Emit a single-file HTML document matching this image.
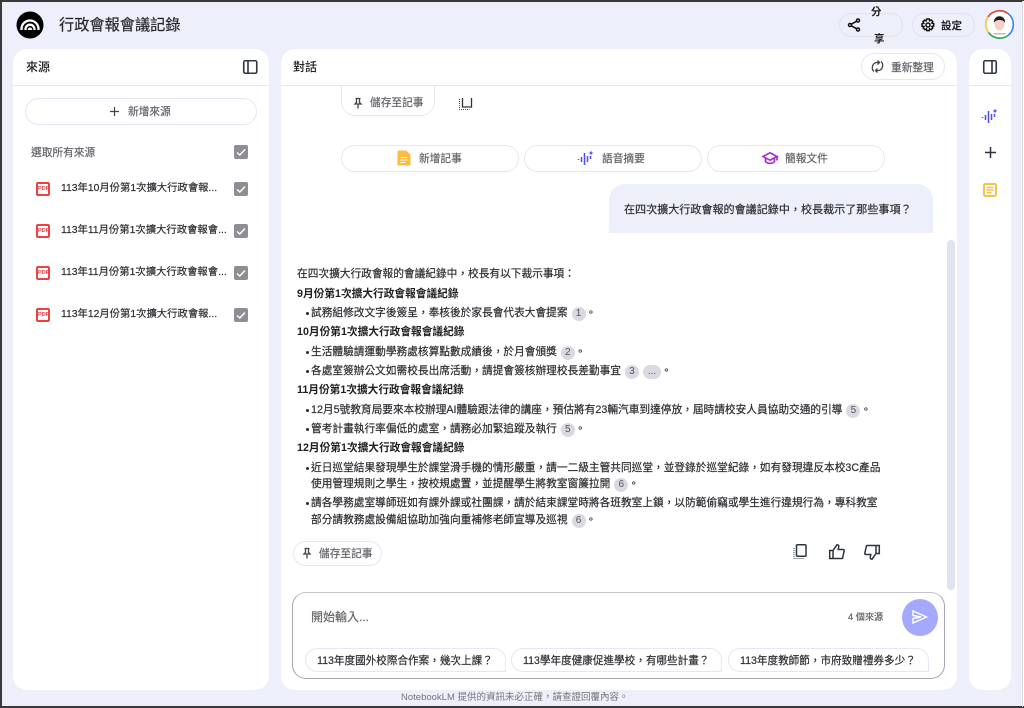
<!DOCTYPE html>
<html lang="zh-Hant"><head><meta charset="utf-8"><title>行政會報會議記錄</title>
<style>
html,body{margin:0;padding:0}
body{width:1024px;height:708px;position:relative;overflow:hidden;background:#edeffa;font-family:"Liberation Sans","Noto Sans CJK TC",sans-serif;color:#3c3c40}
*{box-sizing:border-box}
.t{position:absolute;white-space:nowrap;line-height:16px;font-size:10.7px;color:#2b2b30;transform:translateY(1px);-webkit-text-stroke:.18px currentColor}
.b{font-weight:700;color:#1f1f22;-webkit-text-stroke:0}
.g{color:#626268}
.s{font-size:10.35px}
.panel{position:absolute;top:49px;height:641px;background:#fff;border-radius:14px}
.pill{position:absolute;border:1px solid #e6e7f2;border-radius:14px;background:#fff}
.hl{position:absolute;height:1px;background:#e6e7f2;top:85px}
.cb{position:absolute;left:234px;width:14px;height:14px;background:#8e8e94;border-radius:2px}
.cb svg{display:block}
.pdf{position:absolute;left:36px;width:14px;height:14px;border:2px solid #ea4343;border-radius:2px;color:#ea4343;font-size:5.5px;line-height:10px;text-align:center;font-weight:700;font-family:"Liberation Sans",sans-serif}
.c{display:inline-block;width:14px;height:14px;border-radius:7px;background:#d9d9e3;color:#55555d;font-size:10px;line-height:14px;text-align:center;vertical-align:0;margin:0 0 0 4px;-webkit-text-stroke:0}
svg{position:absolute;overflow:visible}
.bl{position:absolute;left:306px;width:3px;height:3px;border-radius:50%;background:#2b2b30}
</style></head><body>

<!-- logo -->
<svg style="left:16px;top:11px" width="28" height="28" viewBox="0 0 28 28"><circle cx="14" cy="14" r="13.500" fill="#000"/><path d="M5.500 19v-1a8.500 8.500 0 0 1 17 0v1M9.500 19v-.8a4.500 4.500 0 0 1 9 0v.8M13 19v-.3a1 1 0 0 1 2 0v.3" stroke="#fff" stroke-width="2.300" fill="none"/></svg>
<div class="t" style="left:59px;top:15px;font-size:15.2px;line-height:20px;color:#26262a">行政會報會議記錄</div>

<!-- top right -->
<div class="pill" style="left:839px;top:13px;width:64px;height:24px;border-radius:12px;background:#edeffa;border-color:#e0e2ee"></div>
<svg style="left:847px;top:18px" width="14" height="14" viewBox="0 0 14 14"><g fill="none" stroke="#111" stroke-width="1.500"><circle cx="11" cy="2.500" r="1.500"/><circle cx="3" cy="7" r="1.500"/><circle cx="11" cy="11.500" r="1.500"/><path d="M4.300 6.200l5.400-3M4.300 7.800l5.400 3"/></g></svg>
<div class="t b" style="left:871px;top:3px;font-size:10.5px">分</div>
<div class="t b" style="left:874px;top:30px;font-size:10.5px">享</div>
<div class="pill" style="left:912px;top:13px;width:63px;height:24px;border-radius:12px;background:#edeffa;border-color:#e0e2ee"></div>
<svg style="left:921px;top:18px" width="14" height="14" viewBox="0 0 14 14"><circle cx="7" cy="7" r="2" fill="none" stroke="#111" stroke-width="1.500"/><path d="M5.800 1h2.400l.4 1.700 1.500-.8 1.700 1.700-.9 1.500 1.800.5v2.400l-1.800.5.9 1.500-1.700 1.700-1.500-.8-.4 1.700H5.800l-.4-1.700-1.500.8-1.700-1.700.9-1.500L1 8.200V5.800l1.800-.5-.9-1.500 1.700-1.700 1.500.8z" fill="none" stroke="#111" stroke-width="1.500"/></svg>
<div class="t b" style="left:941px;top:17px;font-size:10.5px">設定</div>
<svg style="left:985px;top:10px" width="30" height="30" viewBox="0 0 30 30"><circle cx="14.500" cy="14.500" r="14" fill="#fff"/><path d="M3 7A14 14 0 0 1 23 3.500" fill="none" stroke="#e0483c" stroke-width="1.700"/><path d="M23 3.500A14 14 0 0 1 23 25.500" fill="none" stroke="#4285f4" stroke-width="1.700"/><path d="M3 7A14 14 0 0 0 3.500 22.500" fill="none" stroke="#f5c542" stroke-width="1.700"/><path d="M3.500 22.500A14 14 0 0 0 23 25.500" fill="none" stroke="#34a853" stroke-width="1.700"/><ellipse cx="14.500" cy="14" rx="5" ry="6.500" fill="#f3d2c6"/><path d="M9 13c-1-9 12-9 11 0-1-4-10-4-11 0z" fill="#1c1c1c"/><path d="M8.500 24.500h12v-1.500h-12z" fill="#bbb"/></svg>

<!-- left panel -->
<div class="panel" style="left:13px;width:256px"></div>
<div class="hl" style="left:13px;width:256px"></div>
<div class="t b" style="left:26px;top:58px;font-size:12px;font-weight:500;color:#222">來源</div>
<svg style="left:243px;top:60px" width="15" height="14" viewBox="0 0 15 14"><rect x=".75" y=".75" width="13" height="12.500" rx="1.500" fill="none" stroke="#2f3646" stroke-width="1.600"/><path d="M5 1v12" stroke="#2f3646" stroke-width="1.600"/></svg>
<div class="pill" style="left:25px;top:98px;width:232px;height:27px;border-radius:14px"></div>
<svg style="left:110px;top:107px" width="9" height="9"><path d="M4.500 0v9M0 4.500h9" stroke="#444" stroke-width="1.200"/></svg>
<div class="t g" style="left:128px;top:103px">新增來源</div>
<div class="t g" style="left:31px;top:144px">選取所有來源</div>
<div class="cb" style="top:145px"><svg width="14" height="14"><path d="M3 7.500l2.800 2.500L11 4.500" stroke="#fff" stroke-width="1.400" fill="none"/></svg></div>

<div class="pdf" style="top:182px">PDF</div><div class="t s" style="left:61px;top:180px">113年10月份第1次擴大行政會報...</div>
<div class="cb" style="top:182px"><svg width="14" height="14"><path d="M3 7.500l2.800 2.500L11 4.500" stroke="#fff" stroke-width="1.400" fill="none"/></svg></div>
<div class="pdf" style="top:224px">PDF</div><div class="t s" style="left:61px;top:222px">113年11月份第1次擴大行政會報會...</div>
<div class="cb" style="top:224px"><svg width="14" height="14"><path d="M3 7.500l2.800 2.500L11 4.500" stroke="#fff" stroke-width="1.400" fill="none"/></svg></div>
<div class="pdf" style="top:266px">PDF</div><div class="t s" style="left:61px;top:264px">113年11月份第1次擴大行政會報會...</div>
<div class="cb" style="top:266px"><svg width="14" height="14"><path d="M3 7.500l2.800 2.500L11 4.500" stroke="#fff" stroke-width="1.400" fill="none"/></svg></div>
<div class="pdf" style="top:308px">PDF</div><div class="t s" style="left:61px;top:306px">113年12月份第1次擴大行政會報...</div>
<div class="cb" style="top:308px"><svg width="14" height="14"><path d="M3 7.500l2.800 2.500L11 4.500" stroke="#fff" stroke-width="1.400" fill="none"/></svg></div>

<!-- chat panel -->
<div class="panel" style="left:281px;width:676px"></div>
<div class="t b" style="left:293px;top:58px;font-size:12px;font-weight:500;color:#222">對話</div>
<div class="pill" style="left:861px;top:53px;width:84px;height:27px;border-radius:14px"></div>
<svg style="left:871px;top:60px" width="13" height="13" viewBox="0 0 13 13"><path d="M3 11.500C.500 9.500.500 4 5 2.500h3M6.500 .500L8.500 2.500 6.500 4.500M10 1.500c2.500 2 2.500 7.500-2 9H5M6.500 8.500L4.500 10.500 6.500 12.500" fill="none" stroke="#444" stroke-width="1.300"/></svg>
<div class="t g" style="left:891px;top:59px">重新整理</div>

<div style="position:absolute;left:281px;top:85px;width:676px;height:40px;overflow:hidden">
<div class="pill" style="left:60px;top:-25px;width:94px;height:56px;border-radius:14px"></div>
</div>
<div class="hl" style="left:281px;width:676px"></div>
<svg style="left:354px;top:98px" width="8" height="11" viewBox="0 0 8 11"><path d="M1.500 .500h5M2.500 .500v4L1 6h6L5.500 4.500v-4M4 6v4.500" fill="none" stroke="#444" stroke-width="1.300"/></svg>
<div class="t g" style="left:370px;top:94px">儲存至記事</div>
<svg style="left:459px;top:98px" width="13" height="12" viewBox="0 0 13 12"><path d="M3.500 0v9h9V0" fill="none" stroke="#333" stroke-width="1.300"/><path d="M.500 1v10.500h10" fill="none" stroke="#444" stroke-dasharray="1 1"/></svg>

<div class="pill" style="left:341px;top:145px;width:178px;height:27px"></div>
<svg style="left:397px;top:150px" width="14" height="16" viewBox="0 0 14 16"><path d="M1 2a1 1 0 0 1 1-1h7l4 4v9a1 1 0 0 1-1 1H2a1 1 0 0 1-1-1z" fill="#fbbc40" stroke="#fbbc40"/><path d="M3.500 7.500h7M3.500 10h7M3.500 12.500h5" stroke="#fff" stroke-width="1"/></svg>
<div class="t g" style="left:419px;top:150px">新增記事</div>
<div class="pill" style="left:524px;top:145px;width:178px;height:27px"></div>
<svg style="left:578px;top:150px" width="16" height="16" viewBox="0 0 16 16"><path d="M.500 9v1M3.500 7v5M6.500 3v12M9.500 6v6M12.500 6v3" stroke="#4f4ff0" stroke-width="1.500" fill="none"/><path d="M13 .500l.7 1.800 1.800.7-1.800.7-.7 1.800-.7-1.800-1.800-.7 1.800-.7z" fill="#4f4ff0"/></svg>
<div class="t g" style="left:602px;top:150px">語音摘要</div>
<div class="pill" style="left:707px;top:145px;width:178px;height:27px"></div>
<svg style="left:762px;top:152px" width="16" height="13" viewBox="0 0 16 13"><path d="M8 .800L15 4.500 8 8.200 1 4.500zM3.500 6v3.500c2 2.500 7 2.500 9 0V6M15 4.500v4" fill="none" stroke="#a82de0" stroke-width="1.700"/></svg>
<div class="t g" style="left:785px;top:150px">簡報文件</div>

<div style="position:absolute;left:609px;top:184px;width:324px;height:49px;background:#edeffa;border-radius:16px 16px 0 0"></div>
<div class="t" style="left:624px;top:201px;font-size:11.070px">在四次擴大行政會報的會議記錄中，校長裁示了那些事項？</div>

<div style="position:absolute;left:947px;top:240px;width:8px;height:350px;background:#dfe3ef;border-radius:4px"></div>

<div class="t" style="left:297px;top:265px">在四次擴大行政會報的會議紀錄中，校長有以下裁示事項：</div>
<div class="t b" style="left:297px;top:285px">9月份第1次擴大行政會報會議紀錄</div>
<div class="bl" style="top:312px"></div><div class="t" style="left:311px;top:304px">試務組修改文字後簽呈，奉核後於家長會代表大會提案<span class="c">1</span>。</div>
<div class="t b" style="left:297px;top:323px">10月份第1次擴大行政會報會議紀錄</div>
<div class="bl" style="top:351px"></div><div class="t" style="left:311px;top:343px">生活體驗請運動學務處核算點數成績後，於月會頒獎<span class="c">2</span>。</div>
<div class="bl" style="top:370px"></div><div class="t" style="left:311px;top:362px">各處室簽辦公文如需校長出席活動，請提會簽核辦理校長差勤事宜<span class="c">3</span><span class="c" style="width:18px;margin-left:4px">...</span>。</div>
<div class="t b" style="left:297px;top:381px">11月份第1次擴大行政會報會議紀錄</div>
<div class="bl" style="top:409px"></div><div class="t" style="left:311px;top:401px">12月5號教育局要來本校辦理AI體驗跟法律的講座，預估將有23輛汽車到達停放，屆時請校安人員協助交通的引導<span class="c">5</span>。</div>
<div class="bl" style="top:428px"></div><div class="t" style="left:311px;top:420px">管考計畫執行率偏低的處室，請務必加緊追蹤及執行<span class="c">5</span>。</div>
<div class="t b" style="left:297px;top:439px">12月份第1次擴大行政會報會議紀錄</div>
<div class="bl" style="top:467px"></div><div class="t" style="left:311px;top:459px">近日巡堂結果發現學生於課堂滑手機的情形嚴重，請一二級主管共同巡堂，並登錄於巡堂紀錄，如有發現違反本校3C產品</div>
<div class="t" style="left:311px;top:475px">使用管理規則之學生，按校規處置，並提醒學生將教室窗簾拉開<span class="c">6</span>。</div>
<div class="bl" style="top:502px"></div><div class="t" style="left:311px;top:494px">請各學務處室導師班如有課外課或社團課，請於結束課堂時將各班教室上鎖，以防範偷竊或學生進行違規行為，專科教室</div>
<div class="t" style="left:311px;top:511px">部分請教務處設備組協助加強向重補修老師宣導及巡視<span class="c">6</span>。</div>

<div class="pill" style="left:293px;top:541px;width:89px;height:25px"></div>
<svg style="left:303px;top:548px" width="8" height="11" viewBox="0 0 8 11"><path d="M1.500 .500h5M2.500 .500v4L1 6h6L5.500 4.500v-4M4 6v4.500" fill="none" stroke="#444" stroke-width="1.300"/></svg>
<div class="t g" style="left:319px;top:545px">儲存至記事</div>
<svg style="left:793px;top:544px" width="14" height="16" viewBox="0 0 14 16"><rect x="3.500" y=".800" width="9.500" height="11.500" rx="1" fill="none" stroke="#2f3441" stroke-width="1.500"/><path d="M1 4v10.500h10" fill="none" stroke="#3d424f" stroke-dasharray="1 1"/></svg>
<svg style="left:829px;top:544px" width="16" height="15" viewBox="0 0 16 15"><path d="M.700 6.500h3.300v8H.700zM4 6.500L8 .800c1.500 0 2 1 1.700 2.200L9.200 5.500h5a1 1 0 0 1 1 1.200l-1.500 6.800a1 1 0 0 1-1 1H4" fill="none" stroke="#2f3441" stroke-width="1.500"/></svg>
<svg style="left:864px;top:545px" width="16" height="15" viewBox="0 0 16 15"><path d="M15.300 8.500H12v-8h3.300zM12 8.500L8 14.200c-1.500 0-2-1-1.700-2.200l.5-2.500h-5a1 1 0 0 1-1-1.200L2.300 1.500a1 1 0 0 1 1-1H12" fill="none" stroke="#2f3441" stroke-width="1.500"/></svg>

<!-- input -->
<div style="position:absolute;left:292px;top:592px;width:653px;height:87px;border:1px solid #a5a5ab;border-top-color:#c4c4ca;border-radius:14px;background:#fff"></div>
<div class="t" style="left:311px;top:608px;font-size:12px;color:#66666b">開始輸入...</div>
<div class="t g" style="left:848px;top:608px;font-size:9.200px">4 個來源</div>
<div style="position:absolute;left:902px;top:599px;width:36px;height:37px;border-radius:50%;background:#a5a9fb"></div>
<svg style="left:912px;top:610px" width="16" height="14" viewBox="0 0 16 14"><path d="M1 1l13.500 6L1 13V8.500l8-1.500-8-1.500z" fill="none" stroke="#fff" stroke-width="1.400"/></svg>

<div style="position:absolute;left:305px;top:648px;width:201px;height:24px;border:1px solid #e6e7f2;border-radius:12px 12px 0 12px;background:#fff"></div>
<div class="t" style="left:317px;top:652px;font-size:10.600px">113年度國外校際合作案，幾次上課？</div>
<div style="position:absolute;left:511px;top:648px;width:211px;height:24px;border:1px solid #e6e7f2;border-radius:12px 12px 0 12px;background:#fff"></div>
<div class="t" style="left:523px;top:652px;font-size:10.600px">113學年度健康促進學校，有哪些計畫？</div>
<div style="position:absolute;left:728px;top:648px;width:201px;height:24px;border:1px solid #e6e7f2;border-radius:12px 12px 0 12px;background:#fff"></div>
<div class="t" style="left:740px;top:652px;font-size:10.600px">113年度教師節，市府致贈禮券多少？</div>

<!-- right panel -->
<div class="panel" style="left:969px;width:42px"></div>
<div class="hl" style="left:969px;width:42px"></div>
<svg style="left:983px;top:60px" width="14" height="14" viewBox="0 0 14 14"><rect x=".75" y=".75" width="12.500" height="12.500" rx="1.500" fill="none" stroke="#2f3646" stroke-width="1.600"/><path d="M9 1v12" stroke="#2f3646" stroke-width="1.600"/></svg>
<svg style="left:982px;top:108px" width="16" height="16" viewBox="0 0 16 16"><path d="M.500 9v1M3.500 7v5M6.500 3v12M9.500 6v6M12.500 6v3" stroke="#4f4ff0" stroke-width="1.500" fill="none"/><path d="M13 .500l.7 1.800 1.800.7-1.800.7-.7 1.800-.7-1.800-1.800-.7 1.800-.7z" fill="#4f4ff0"/></svg>
<svg style="left:985px;top:147px" width="11" height="11"><path d="M5.500 0v11M0 5.500h11" stroke="#2b3140" stroke-width="1.500"/></svg>
<svg style="left:983px;top:183px" width="14" height="14" viewBox="0 0 14 14"><rect x="1" y="1" width="12" height="12" rx="1.500" fill="none" stroke="#fbc04a" stroke-width="2"/><path d="M3.500 4.500h7M3.500 7h7M3.500 9.500h5" stroke="#fbc04a" stroke-width="1.400"/></svg>

<div class="t" style="left:401px;top:690px;font-size:9.500px;line-height:14px;color:#75757a;-webkit-text-stroke:0">NotebookLM 提供的資訊未必正確，請查證回覆內容。</div>

<!-- window edge -->
<div style="position:absolute;left:0;top:0;width:2px;height:708px;background:#3a3a3c"></div>
<div style="position:absolute;left:0;top:0;width:1024px;height:1.500px;background:#3a3a3c"></div>
<div style="position:absolute;left:0;top:706px;width:1024px;height:2px;background:#3a3a3c"></div>
<div style="position:absolute;left:1021.500px;top:1px;width:1px;height:706px;background:#dcdce2"></div>
<div style="position:absolute;left:1022.500px;top:1px;width:1.500px;height:705px;background:#fff"></div>
</body></html>
